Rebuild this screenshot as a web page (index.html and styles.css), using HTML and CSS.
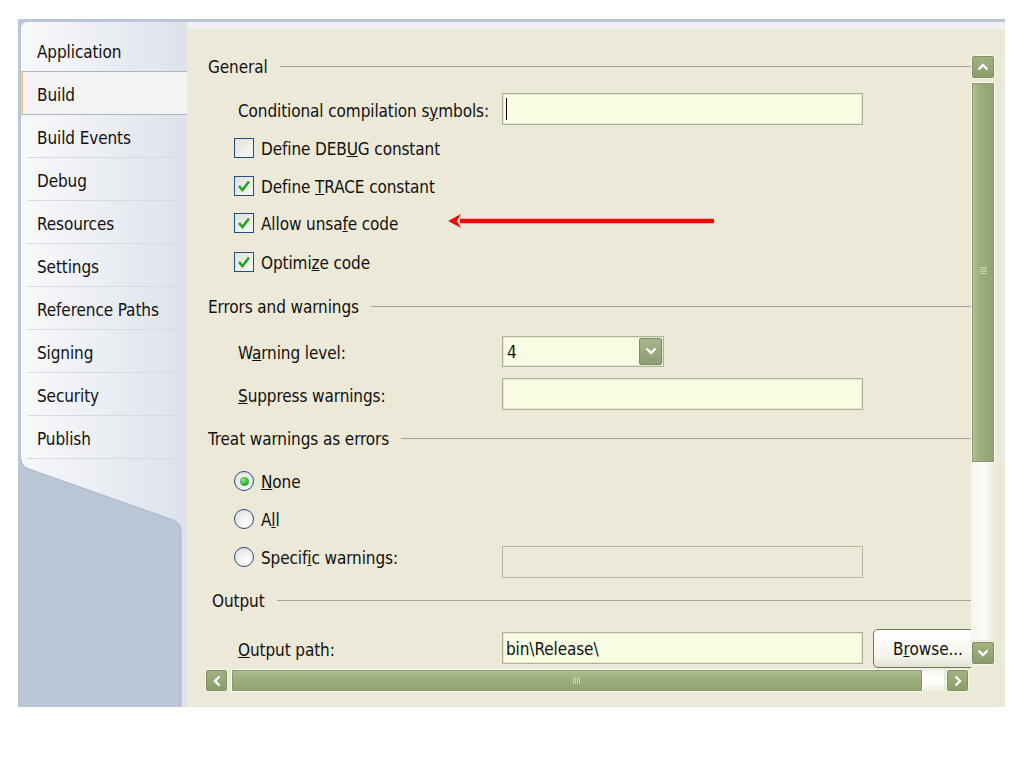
FILE: index.html
```html
<!DOCTYPE html>
<html>
<head>
<meta charset="utf-8">
<link rel="stylesheet" href="styles.css">
</head>
<body>
<div class="screen">
  <div class="window">
    <nav class="side">
      <ul class="tabs">
        <li class="tab">Application</li>
        <li class="tab active">Build</li>
        <li class="tab">Build Events</li>
        <li class="tab">Debug</li>
        <li class="tab">Resources</li>
        <li class="tab">Settings</li>
        <li class="tab">Reference Paths</li>
        <li class="tab">Signing</li>
        <li class="tab">Security</li>
        <li class="tab">Publish</li>
      </ul>
      <div class="tail">
        <svg width="166" height="248" viewBox="0 0 166 248">
          <defs>
            <linearGradient id="tg" x1="0" y1="0" x2="166" y2="0" gradientUnits="userSpaceOnUse">
              <stop offset="0" stop-color="#f7f8fa"/>
              <stop offset="1" stop-color="#dde2ea"/>
            </linearGradient>
          </defs>
          <rect x="160" y="0" width="6" height="248" fill="#e3e7ed"/>
          <path d="M0,0 H166 V248 H160 V72 Q160,64 152,61 L8,10 Q0,7 0,0 Z" fill="url(#tg)"/>
          <path d="M160,248 V72 Q160,64 152,61 L8,10 Q0,7 0,0" fill="none" stroke="#a9b5c6" stroke-width="1"/>
        </svg>
      </div>
    </nav>
    <main class="pane">
      <div class="pane-top"></div>
      <div class="content">
        <div class="body-row">
          <div class="form">
            <div class="group g-general"><span class="gtitle">General</span><span class="gline"></span></div>

            <div class="row r-cond">
              <span class="label">Conditional compilation s<u>y</u>mbols:</span>
              <span class="field"><span class="caret"></span></span>
            </div>

            <div class="row check r-debug"><span class="box"></span><span class="txt">Define DEB<u>U</u>G constant</span></div>
            <div class="row check r-trace"><span class="box"><svg width="18" height="18" viewBox="0 0 18 18"><path d="M4,9 L7.5,13 L14,4.5" fill="none" stroke="#22a322" stroke-width="2.6"/></svg></span><span class="txt">Define <u>T</u>RACE constant</span></div>
            <div class="row check r-unsafe"><span class="box"><svg width="18" height="18" viewBox="0 0 18 18"><path d="M4,9 L7.5,13 L14,4.5" fill="none" stroke="#22a322" stroke-width="2.6"/></svg></span><span class="txt">Allow unsa<u>f</u>e code</span></div>
            <div class="row check r-opt"><span class="box"><svg width="18" height="18" viewBox="0 0 18 18"><path d="M4,9 L7.5,13 L14,4.5" fill="none" stroke="#22a322" stroke-width="2.6"/></svg></span><span class="txt">Optimi<u>z</u>e code</span></div>

            <div class="group g-errors"><span class="gtitle">Errors and warnings</span><span class="gline"></span></div>

            <div class="row r-warn">
              <span class="label">W<u>a</u>rning level:</span>
              <span class="field select"><span class="sel-val">4</span><span class="sel-btn"><svg width="14" height="10" viewBox="0 0 14 10"><path d="M2.5,2.5 L7,7 L11.5,2.5" fill="none" stroke="#fff" stroke-width="2.4"/></svg></span></span>
            </div>

            <div class="row r-supp">
              <span class="label"><u>S</u>uppress warnings:</span>
              <span class="field"></span>
            </div>

            <div class="group g-treat"><span class="gtitle">Treat warnings as errors</span><span class="gline"></span></div>

            <div class="row check r-none"><span class="radio on"><span class="dot"></span></span><span class="txt"><u>N</u>one</span></div>
            <div class="row check r-all"><span class="radio"></span><span class="txt">A<u>l</u>l</span></div>
            <div class="row check r-spec">
              <span class="radio"></span><span class="spec-label">Specif<u>i</u>c warnings:</span>
              <span class="field disabled"></span>
            </div>

            <div class="group g-output"><span class="gtitle">Output</span><span class="gline"></span></div>

            <div class="row r-out">
              <span class="label"><u>O</u>utput path:</span>
              <span class="field"><span class="fval">bin\Release\</span></span>
              <span class="browse">B<u>r</u>owse...</span>
            </div>

            <svg class="arrow" width="280" height="20" viewBox="0 0 280 20">
              <path d="M12,10 H266" stroke="#ee0a0a" stroke-width="4.5"/>
              <path d="M0,10 L13,3 L9,10 L13,17 Z" fill="#ee0a0a"/>
            </svg>
          </div>

          <div class="vscroll">
            <span class="sbtn"><svg width="14" height="10" viewBox="0 0 14 10"><path d="M2.5,7.5 L7,3 L11.5,7.5" fill="none" stroke="#fff" stroke-width="2.4"/></svg></span>
            <span class="vthumb"><span class="vgrip"></span></span>
            <span class="vtrack"></span>
            <span class="sbtn"><svg width="14" height="10" viewBox="0 0 14 10"><path d="M2.5,2.5 L7,7 L11.5,2.5" fill="none" stroke="#fff" stroke-width="2.4"/></svg></span>
          </div>
        </div>
        <div class="hscroll">
          <span class="sbtn h"><svg width="10" height="14" viewBox="0 0 10 14"><path d="M7.5,2.5 L3,7 L7.5,11.5" fill="none" stroke="#fff" stroke-width="2.4"/></svg></span>
          <span class="hthumb"><span class="hgrip"></span></span>
          <span class="htrack"></span>
          <span class="sbtn h"><svg width="10" height="14" viewBox="0 0 10 14"><path d="M2.5,2.5 L7,7 L2.5,11.5" fill="none" stroke="#fff" stroke-width="2.4"/></svg></span>
        </div>
      </div>
    </main>
  </div>
</div>
</body>
</html>
```

FILE: styles.css
```css
html, body {
  margin: 0;
  padding: 0;
  background: #ffffff;
}
body {
  font-family: "DejaVu Sans Condensed", "DejaVu Sans", sans-serif;
  font-size: 17px;
  letter-spacing: -0.1px;
  color: #111;
  width: 1024px;
  height: 767px;
  overflow: hidden;
}
.screen {
  padding: 19px 0 0 18px;
}
.window {
  width: 987px;
  height: 688px;
  background: #bac6d6;
  display: flex;
}
.side {
  width: 169px;
  padding: 3px 0 0 3px;
  box-sizing: border-box;
  display: flex;
  flex-direction: column;
}
.tabs {
  list-style: none;
  margin: 0;
  padding: 7px 0 0;
  background: linear-gradient(to right, #f8f9fb, #dde2ea);
  border-top-left-radius: 6px;
}
.tab {
  height: 43px;
  box-sizing: border-box;
  display: flex;
  align-items: center;
  padding-left: 16px;
  padding-top: 3px;
  background: linear-gradient(#d6dae2, #d6dae2) no-repeat 6px 100% / calc(100% - 14px) 1px;
}
.tab.active {
  background: #f3f3f4;
  border-top: 1px solid #aab4c3;
  border-bottom: 1px solid #aab4c3;
  border-left: 2px solid #f1d27a;
  padding-left: 14px;
  margin-top: -1px;
  height: 44px;
}
.tail {
  height: 248px;
  display: block;
}
.tail svg { display: block; }

.pane {
  width: 818px;
  padding-top: 3px;
  display: flex;
  flex-direction: column;
}
.pane-top {
  height: 7px;
  background: #eef0f3;
}
.content {
  height: 678px;
  background: #ece9d8;
  display: flex;
  flex-direction: column;
}
.body-row {
  height: 640px;
  display: flex;
}
.form {
  width: 784px;
  overflow: hidden;
  position: relative;
  padding-top: 25px;
  box-sizing: border-box;
}

.group {
  display: flex;
  align-items: center;
  height: 24px;
  padding-left: 21px;
}
.gtitle { white-space: nowrap; padding-top: 2px; }
.gline {
  flex: 1;
  height: 1px;
  background: #a3a293;
  margin-left: 12px;
}
.g-output { padding-left: 25px; }

.row {
  display: flex;
  align-items: center;
  height: 32px;
  padding-left: 51px;
  white-space: nowrap;
}
.row > * { flex: none; }
.row.check { padding-left: 47px; }
.label { width: 264px; padding-top: 3px; }
.txt { padding-top: 2px; }

.r-cond { margin-top: 15px; }
.r-debug { margin-top: 7px; }
.r-trace { margin-top: 6px; }
.r-unsafe { margin-top: 5px; }
.r-opt { margin-top: 7px; }
.g-errors { margin-top: 16px; }
.r-warn { margin-top: 17px; }
.r-supp { margin-top: 11px; }
.g-treat { margin-top: 16px; }
.r-none { margin-top: 15px; }
.r-all { margin-top: 6px; }
.r-spec { margin-top: 6px; align-items: flex-start; }
.g-output { margin-top: 15px; }
.r-out { margin-top: 20px; }

.field {
  width: 361px;
  height: 32px;
  box-sizing: border-box;
  background: #f8fce2;
  border: 1px solid #aab393;
  box-shadow: inset 0 0 0 1px #e6ead2;
  display: flex;
  align-items: center;
}
.caret {
  width: 1px;
  height: 22px;
  background: #000;
  margin-left: 3px;
}
.fval { padding-left: 3px; padding-top: 2px; }

.select {
  width: 162px;
  height: 31px;
  justify-content: space-between;
}
.sel-val { padding-left: 4px; padding-top: 2px; }
.sel-btn {
  width: 23px;
  height: 27px;
  margin-right: 1px;
  box-sizing: border-box;
  background: linear-gradient(#a8b48f, #8e9c72);
  border: 1px solid #7d8a63;
  border-radius: 2px;
  display: flex;
  align-items: center;
  justify-content: center;
}

.box {
  width: 20px;
  height: 20px;
  box-sizing: border-box;
  border: 1px solid #1f4f7d;
  background: linear-gradient(135deg, #e2e1da, #f8f8f5);
  margin-right: 7px;
  display: flex;
  align-items: center;
  justify-content: center;
}
.radio {
  width: 20px;
  height: 20px;
  box-sizing: border-box;
  border: 1px solid #244e78;
  border-radius: 50%;
  background: radial-gradient(circle at 65% 70%, #ffffff, #dcdcd6);
  margin-right: 7px;
  display: flex;
  align-items: center;
  justify-content: center;
}
.dot {
  width: 9px;
  height: 9px;
  border-radius: 50%;
  background: radial-gradient(circle at 40% 35%, #8ee58e, #1ea61e 70%);
}
.r-spec .radio { margin-top: 6px; }
.r-spec .spec-label { width: 241px; margin-top: 7px; line-height: 20px; }
.field.disabled {
  background: #ece9d8;
  border-color: #b5b9a0;
  box-shadow: none;
  height: 32px;
  margin-top: 5px;
}

.browse {
  margin-left: 10px;
  width: 112px;
  height: 39px;
  box-sizing: border-box;
  border: 1px solid #6f7a5a;
  border-radius: 5px;
  background: linear-gradient(#ffffff, #f5f4ec 70%, #e3e1d1);
  display: flex;
  align-items: center;
  padding-left: 19px;
  padding-top: 2px;
}

.arrow {
  position: absolute;
  left: 261px;
  top: 182px;
}

.vscroll {
  width: 24px;
  margin-top: 26px;
  height: 610px;
  display: flex;
  flex-direction: column;
  margin-right: 10px;
}
.sbtn {
  width: 24px;
  height: 24px;
  flex: none;
  box-sizing: border-box;
  border: 1px solid #f4f6ee;
  border-radius: 3px;
  background: linear-gradient(#a1b282, #8a9d69);
  box-shadow: inset 0 0 0 1px #7f9160;
  display: flex;
  align-items: center;
  justify-content: center;
}
.vthumb {
  margin-top: 3px;
  height: 381px;
  box-sizing: border-box;
  border: 1px solid #ffffff;
  box-shadow: inset 0 0 0 1px #889a68;
  background: linear-gradient(to right, #b4c29b, #9cae7c 35%, #92a472 100%);
  display: flex;
  justify-content: center;
  padding-top: 184px;
}
.vgrip {
  width: 7px;
  height: 8px;
  background: repeating-linear-gradient(#c9d5b6 0 1px, transparent 1px 2px);
}
.vtrack {
  flex: 1;
  background: linear-gradient(to right, #f7f7f1, #fbfbf7 60%, #ece9d8);
  margin-bottom: 1px;
}
.hscroll {
  margin-left: 18px;
  width: 764px;
  height: 23px;
  display: flex;
}
.sbtn.h {
  width: 23px;
  height: 23px;
}
.hthumb {
  margin-left: 3px;
  width: 692px;
  box-sizing: border-box;
  border: 1px solid #ffffff;
  box-shadow: inset 0 0 0 1px #889a68;
  background: linear-gradient(#b3c19a, #9cae7c 40%, #92a472);
  display: flex;
  align-items: center;
  padding-left: 341px;
}
.hgrip {
  width: 8px;
  height: 7px;
  background: repeating-linear-gradient(to right, #c9d5b6 0 1px, transparent 1px 2px);
}
.htrack {
  flex: 1;
  background: linear-gradient(#f6f6f0, #ffffff 60%, #ece9d8);
  margin-right: 2px;
}
```
